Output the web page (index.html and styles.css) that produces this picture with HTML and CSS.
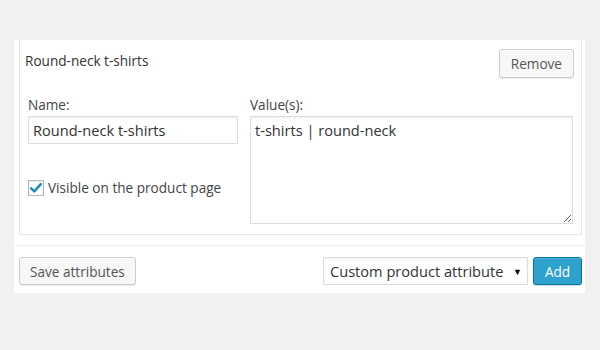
FILE: index.html
```html
<!DOCTYPE html>
<html lang="en">
<head>
  <meta charset="UTF-8" />
  <title>Product attributes</title>
  <link rel="stylesheet" href="styles.css">
</head>
<body>

  <div class="panel">
    <div class="attribute">
      <div class="attribute-head">
        <strong class="attribute-name">Round-neck t-shirts</strong>
        <button type="button" class="button">Remove</button>
      </div>

      <div class="attribute-fields">
        <div class="col-name">
          <label class="field-label" for="attr-name">Name:</label>
          <input type="text" id="attr-name" class="text-input" value="Round-neck t-shirts" />

          <label class="visible-row">
            <span class="checkbox">
              <svg width="14" height="14" viewBox="0 0 14 14">
                <path d="M2.2 7.4 L5.3 10.4 L11.8 3.2" fill="none" stroke="#1e8cbe" stroke-width="2.6" stroke-linecap="round" stroke-linejoin="round"/>
              </svg>
            </span>
            Visible on the product page
          </label>
        </div>

        <div class="col-values">
          <label class="field-label" for="attr-values">Value(s):</label>
          <textarea id="attr-values" class="text-area">t-shirts | round-neck</textarea>
        </div>
      </div>
    </div>

    <div class="toolbar">
      <button type="button" class="button">Save attributes</button>
      <div class="toolbar-right">
        <div class="select-wrap">
          <select class="attr-select">
            <option>Custom product attribute</option>
          </select>
          <span class="select-arrow">&#9660;</span>
        </div>
        <button type="button" class="button button-primary">Add</button>
      </div>
    </div>
  </div>

</body>
</html>
```

FILE: styles.css
```css
* {
  box-sizing: border-box;
}
body {
  margin: 0;
  padding: 40px 0 0 14px;
  background-color: #f1f1f1;
  font-family: "Open Sans", sans-serif;
  font-size: 13.6px;
  color: #444;
}
.panel {
  width: 571px;
  background-color: #fff;
}
.attribute {
  margin: 0 3px 0 5px;
  border: 1px solid #e5e5e5;
  border-top: none;
  padding-bottom: 10px;
}
.attribute-head {
  display: flex;
  justify-content: space-between;
  align-items: flex-start;
  padding: 9px 7px 0 5px;
}
.attribute-name {
  font-weight: normal;
  color: #333;
  line-height: 18px;
  padding-top: 3px;
}
.button {
  height: 29px;
  padding: 0 11px;
  font-family: "Open Sans", sans-serif;
  font-size: 13.6px;
  color: #555;
  background-color: #f7f7f7;
  border: 1px solid #ccc;
  border-radius: 3px;
  box-shadow: inset 0 1px 0 #fff, 0 1px 0 rgba(0, 0, 0, 0.08);
  cursor: pointer;
}
.toolbar .button {
  height: 28px;
  padding: 0 10px;
}
.toolbar .button-primary {
  color: #fff;
  background-color: #2ea2cc;
  border-color: #0074a2;
  box-shadow: inset 0 1px 0 rgba(120, 200, 230, 0.5), 0 1px 0 rgba(0, 0, 0, 0.15);
  width: 49px;
  padding: 0;
}
.attribute-fields {
  display: flex;
  gap: 12px;
  padding: 0 8px;
  margin-top: 18px;
}
.col-name {
  width: 210px;
}
.col-values {
  width: 323px;
}
.field-label {
  display: block;
  line-height: 18px;
  margin-bottom: 2px;
  color: #444;
}
.text-input,
.text-area {
  display: block;
  width: 100%;
  border: 1px solid #ddd;
  box-shadow: inset 0 1px 2px rgba(0, 0, 0, 0.07);
  font-family: "Open Sans", sans-serif;
  font-size: 14.6px;
  color: #333;
  background: #fff;
  margin: 0;
}
.text-input {
  height: 28px;
  padding: 0 4px;
}
.text-area {
  height: 108px;
  padding: 3px 4px;
  line-height: 20px;
  resize: vertical;
}
.visible-row {
  display: flex;
  align-items: center;
  gap: 4px;
  margin-top: 35px;
  line-height: 18px;
  color: #444;
}
.checkbox {
  width: 16px;
  height: 16px;
  border: 1px solid #b4b9be;
  background: #fff;
  box-shadow: inset 0 1px 2px rgba(0, 0, 0, 0.1);
  display: flex;
  align-items: center;
  justify-content: center;
  flex-shrink: 0;
}
.toolbar {
  margin-top: 10px;
  border-top: 1px solid #eee;
  padding: 11px 3px 8px 5px;
  display: flex;
  justify-content: space-between;
}
.toolbar-right {
  display: flex;
  gap: 5px;
}
.select-wrap {
  position: relative;
}
.attr-select {
  appearance: none;
  -webkit-appearance: none;
  width: 205px;
  height: 28px;
  padding: 0 6px;
  border: 1px solid #ddd;
  border-radius: 0;
  box-shadow: inset 0 1px 2px rgba(0, 0, 0, 0.07);
  background: #fff;
  font-family: "Open Sans", sans-serif;
  font-size: 14.6px;
  color: #333;
}
.select-arrow {
  position: absolute;
  right: 6px;
  top: 8px;
  font-size: 9px;
  color: #000;
  pointer-events: none;
}
```
